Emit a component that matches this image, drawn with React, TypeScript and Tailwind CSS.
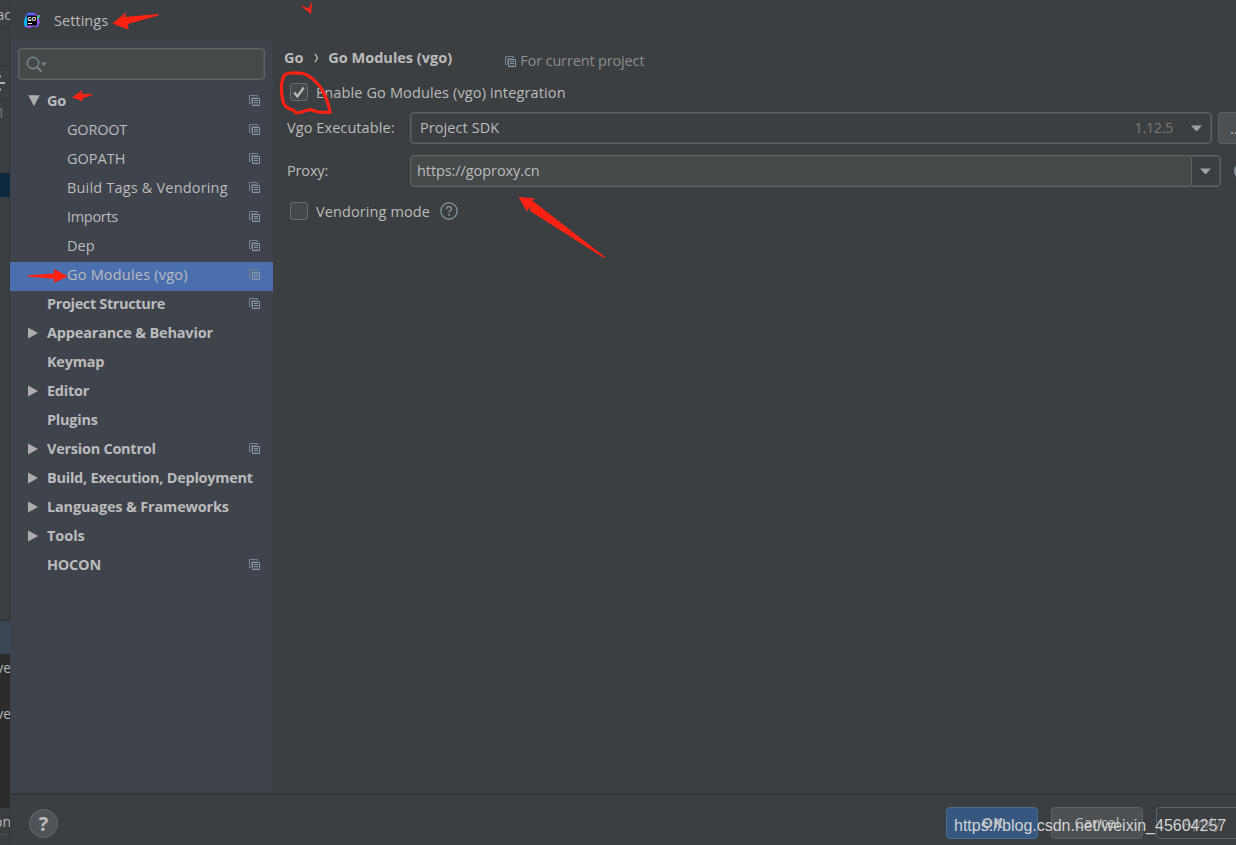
import clsx from 'clsx';

interface TreeItem {
  label: string;
  level: 'root' | 'child';
  arrow?: 'open' | 'closed';
  project?: boolean;
  selected?: boolean;
  tracking?: string;
}

const treeItems: TreeItem[] = [
  { label: 'Go', level: 'root', arrow: 'open', project: true },
  { label: 'GOROOT', level: 'child', project: true, tracking: 'tracking-[-0.2px]' },
  { label: 'GOPATH', level: 'child', project: true },
  { label: 'Build Tags & Vendoring', level: 'child', project: true, tracking: 'tracking-[0.18px]' },
  { label: 'Imports', level: 'child', project: true, tracking: 'tracking-[-0.3px]' },
  { label: 'Dep', level: 'child', project: true },
  { label: 'Go Modules (vgo)', level: 'child', project: true, selected: true, tracking: 'tracking-[0.2px]' },
  { label: 'Project Structure', level: 'root', project: true, tracking: 'tracking-[-0.36px]' },
  { label: 'Appearance & Behavior', level: 'root', arrow: 'closed', tracking: 'tracking-[-0.19px]' },
  { label: 'Keymap', level: 'root' },
  { label: 'Editor', level: 'root', arrow: 'closed' },
  { label: 'Plugins', level: 'root' },
  { label: 'Version Control', level: 'root', arrow: 'closed', project: true },
  { label: 'Build, Execution, Deployment', level: 'root', arrow: 'closed' },
  { label: 'Languages & Frameworks', level: 'root', arrow: 'closed', tracking: 'tracking-[-0.17px]' },
  { label: 'Tools', level: 'root', arrow: 'closed', tracking: 'tracking-[-0.05px]' },
  { label: 'HOCON', level: 'root', project: true },
];

function ProjectIcon() {
  return (
    <svg width="11" height="11" viewBox="0 0 11 11" fill="none" className="shrink-0">
      <path d="M8.500 2V.5H.5v8H2" stroke="#76818a" />
      <path d="M2.500 8V2.500H8" stroke="#626c76" />
      <path d="M3.500 3.500h7v7h-7z" stroke="#8d99a2" />
      <path d="M5 5.500h4M5 7.500h4" stroke="#8d99a2" />
      <path d="M5 9.200h4" stroke="#6f7a83" strokeWidth="0.6" />
    </svg>
  );
}

function TreeArrow({ type }: { type: 'open' | 'closed' }) {
  return (
    <svg width="12" height="12" viewBox="0 0 12 12" fill="#adadad">
      {type === 'open' ? <path d="M.3 .3h11.400L6 11.300z" /> : <path d="M0 .5v11L10 6z" />}
    </svg>
  );
}

function GolandIcon() {
  return (
    <svg width="16" height="17" viewBox="0 0 16 17">
      <defs>
        <linearGradient id="goland" x1="0" y1="0" x2="1" y2="1">
          <stop offset="0" stopColor="#1b8df5" />
          <stop offset="0.3" stopColor="#5a5cf5" />
          <stop offset="0.5" stopColor="#b04df5" />
          <stop offset="1" stopColor="#7c6bff" />
        </linearGradient>
      </defs>
      <path d="M3 1 10 .5 13 3h3l-1 4 .8 4-2.300 4-4.500-.5L5 16l-4-1-1-5 1.500-5z" fill="url(#goland)" />
      <path d="M0 10 1.500 4l2 3v8L.5 14z" fill="#00b4f0" />
      <path d="m13 4 3-1-1.500 4-1.500-1z" fill="#27dc7c" />
      <path d="M3 3.500h10v10H3z" fill="#000" />
      <text x="3.200" y="8.800" fontSize="6" fontWeight="700" fill="#fff">GO</text>
      <path d="M4 11.500h4" stroke="#fff" />
    </svg>
  );
}

// Sliver of the IDE window that stays visible left of the dialog
function EditorEdge() {
  return (
    <div className="flex w-2.5 shrink-0 flex-col overflow-hidden bg-[#3c3f41] text-[14px] text-[#b4b6b7] shadow-[inset_-1px_0_0_#323536]">
      <div className="flex h-[29px] items-center justify-end border-b border-[#323232]">
        <span className="-mr-px">ac</span>
      </div>
      <div className="h-[37px] border-b border-[#323232]" />
      <div className="flex h-[34px] items-center border-b border-[#323232]">
        <svg width="6" height="18" viewBox="0 0 6 18">
          <path d="M0 9h5M0 2.500h1M0 15.500h1" stroke="#afb1b3" strokeWidth="2" />
        </svg>
      </div>
      <div className="flex h-[73px] justify-start pt-[3px] leading-5 text-[#777a7d]">
        <span className="-ml-[3px]">1</span>
      </div>
      <div className="h-6 bg-[#0d293e]" />
      <div className="h-[424px] shrink-0 border-b border-[#323232]" />
      <div className="h-[33px] shrink-0 bg-[#3b4754]" />
      <div className="flex h-[154px] shrink-0 flex-col items-end gap-[26px] bg-[#2b2b2b] pt-1 leading-5">
        <span className="-mr-px">ve</span>
        <span className="-mr-px">ve</span>
      </div>
      <div className="flex h-[27px] shrink-0 items-center justify-end border-b border-[#4b4e50]">
        <span className="-mr-px">on</span>
      </div>
    </div>
  );
}

function Sidebar() {
  return (
    <aside className="flex w-[263px] shrink-0 flex-col bg-[#3f434c]">
      <div className="mx-2 mt-2 flex h-8 items-center rounded-[4px] border border-[#5f6365] bg-[#45494a] px-[7px] shadow-[inset_0_0_0_1px_#505456]">
        <svg width="22" height="17" viewBox="0 0 22 17" fill="none">
          <circle cx="7" cy="7" r="5.700" stroke="#7b868c" strokeWidth="1.400" />
          <path d="m11 11 4.500 4.500" stroke="#7b868c" strokeWidth="1.800" />
          <path d="M15 6.500h6L18 10z" fill="#7b868c" />
        </svg>
      </div>
      <ul className="mt-2">
        {treeItems.map((item) => (
          <li
            key={item.label}
            className={clsx(
              'flex h-[29px] items-center pr-[13px] text-[#bbbbbb]',
              item.selected && 'bg-[#4b6eaf]'
            )}
          >
            <span className={clsx('flex shrink-0 pb-1', item.level === 'root' ? 'w-[37px] pl-[18px]' : 'w-[57px]')}>
              {item.arrow && <TreeArrow type={item.arrow} />}
            </span>
            <span
              className={clsx(
                'flex-1 whitespace-nowrap pb-[3px]',
                item.level === 'root' && 'text-[14.500px] font-bold',
                item.tracking ?? (item.level === 'root' && 'tracking-[-0.26px]')
              )}
            >
              {item.label}
            </span>
            {item.project && (
              <span className="flex shrink-0 pb-1">
                <ProjectIcon />
              </span>
            )}
          </li>
        ))}
      </ul>
    </aside>
  );
}

function Checkbox({ checked }: { checked?: boolean }) {
  return (
    <span className="flex size-[18px] items-center justify-center rounded-[3px] border border-[#6b6e70] bg-[#43494a]">
      {checked && (
        <svg width="12" height="13" viewBox="0 0 12 13" fill="none">
          <path d="m1.200 6.500 3.200 4L10.800 1.500" stroke="#bbb" strokeWidth="2.200" />
        </svg>
      )}
    </span>
  );
}

function DownArrow() {
  return (
    <svg width="11" height="7" viewBox="0 0 11 7" fill="#9da2a6">
      <path d="M0 .5h11L5.500 6.500z" />
    </svg>
  );
}

function ModulesPage() {
  return (
    <main className="flex min-w-0 flex-1 flex-col overflow-hidden">
      <div className="flex h-[41px] items-start pl-[11px] pt-2">
        <span className="text-[14.500px] font-bold leading-5 tracking-[-0.1px]">Go</span>
        <svg width="6" height="10" viewBox="0 0 6 10" fill="none" className="ml-[11px] mt-[5px]">
          <path d="m1 .8 2.500 4.200L1 9.200" stroke="#bbb" strokeWidth="1.300" />
        </svg>
        <span className="ml-2 w-[177px] text-[14.500px] font-bold leading-5">Go Modules (vgo)</span>
        <span className="mt-[3px] flex items-center gap-1 leading-5 tracking-[-0.15px] text-[#8c8c8c]">
          <ProjectIcon />
          For current project
        </span>
      </div>

      <label className="flex h-[22px] items-center gap-2 pl-[17px] tracking-[0.14px]">
        <Checkbox checked />
        <span className="pt-0.5">Enable Go Modules (vgo) integration</span>
      </label>

      <div className="mt-[9px] flex h-8 items-center pl-3.5">
        <span className="w-[123px] shrink-0 tracking-[0.08px]">Vgo Executable:</span>
        <div className="flex h-8 w-[802px] shrink-0 items-center rounded-[4px] border border-[#5f6264] px-[9px] shadow-[inset_0_0_0_1px_#4c4f51]">
          <span className="flex-1 tracking-[0.08px]">Project SDK</span>
          <span className="mr-[18px] tracking-[-0.4px] text-[#777a7c]">1.12.5</span>
          <DownArrow />
        </div>
        <div className="ml-1.5 flex h-8 w-10 shrink-0 items-center rounded-[4px] border border-[#5f6264] bg-[#4c5052] pl-[11px] pt-0.5">
          ...
        </div>
      </div>

      <div className="mt-[11px] flex h-8 items-center pl-3.5">
        <span className="w-[123px] shrink-0 tracking-[-0.15px]">Proxy:</span>
        <div className="flex h-8 w-[811px] shrink-0 overflow-hidden rounded-[4px] border border-[#5f6264] bg-[#4c4f51] p-px">
          <span className="flex-1 rounded-l-[2px] bg-[#45494a] pl-[5px] leading-7 tracking-[-0.08px]">
            https://goproxy.cn
          </span>
          <span className="flex w-7 items-center justify-center rounded-r-[2px] border-l border-[#5f6264] bg-[#3c3f41]">
            <DownArrow />
          </span>
        </div>
        <span className="ml-[13px] size-[18px] shrink-0 rounded-full border-2 border-[#7f8b91]" />
      </div>

      <div className="mt-3 flex h-6 items-center pl-[17px]">
        <Checkbox />
        <span className="ml-2 w-[124px] pt-0.5 tracking-[0.1px]">Vendoring mode</span>
        <svg width="18" height="18" viewBox="0 0 18 18" fill="none" stroke="#7f8b91">
          <circle cx="9" cy="9" r="8.200" strokeWidth="1.400" />
          <path d="M6.500 7.200c0-3.400 5-3.400 5-.4 0 1.900-2.500 1.900-2.500 3.700" strokeWidth="1.500" />
          <path d="M9 12v1.700" strokeWidth="1.700" />
        </svg>
      </div>
    </main>
  );
}

function Footer() {
  return (
    <footer className="flex h-[52px] shrink-0 items-start overflow-hidden border-t-2 border-[#333638] pl-[19px]">
      <span className="mt-3.5 flex size-[29px] shrink-0 items-center justify-center rounded-full border border-[#66696b] bg-[#4f5355] text-[20px] font-bold leading-none text-[#bbbbbb]">
        ?
      </span>
      <div className="ml-[888px] mt-3 flex shrink-0 gap-[13px]">
        <button className="h-8 w-[92px] rounded-[4px] border border-[#4c708c] bg-[#365880] font-bold">OK</button>
        <button className="h-8 w-[92px] rounded-[4px] border border-[#5f6264] bg-[#4c5052]">Cancel</button>
        <button className="h-8 w-[92px] rounded-[4px] border border-[#5f6264] text-[#777777]">Apply</button>
      </div>
    </footer>
  );
}

// Hand-drawn red marks on top of the dialog
function Annotations() {
  return (
    <svg width="1236" height="845" viewBox="0 0 1236 845" className="pointer-events-none absolute left-0 top-0" fill="#ff2213">
      <path d="m112.500 23.500 14-11.500-2 5 34-3v1.500L131 23l-3 1 .5 5.500z" />
      <path d="m72 97.500 10.500-7.500-1 4 11 .3v.8L82 98.500l.5 3.500-3-2z" />
      <path d="M27.500 275.300 54 273.500V269l14 7.500-14.500 6.500 1-4-26.500-2.500z" />
      <path d="m518.500 197 17.500 1.500-4.500 1.500 73.500 57-1 1-74-47 .5-4.500-3.500 5z" />
      <path d="m300 5 8.500 3.500L312 1.500l-1 12.500z" />
      <path
        d="M303 73.500c-8-1.500-17-.5-19 2-3.500 7-2.500 19-1 26 1 5 5 7 11 9l2 2.500 4-.5 10-3 8 2.500 12 .5c-1-9-5-18-10-26-5-6-12-12-17-13z"
        fill="none"
        stroke="#ff2213"
        strokeWidth="3.200"
        strokeLinejoin="round"
      />
    </svg>
  );
}

export default function App() {
  return (
    <div className="relative flex h-[845px] w-[1236px] overflow-hidden bg-[#3c3f41] font-['Open_Sans','Noto_Sans',sans-serif] text-[14.500px] text-[#bbbbbb]">
      <EditorEdge />
      <div className="flex min-w-0 flex-1 flex-col">
        <header className="flex h-10 shrink-0 items-center gap-3.5 pl-3.5">
          <GolandIcon />
          <span className="pt-0.5 tracking-[0.05px]">Settings</span>
        </header>
        <div className="flex min-h-0 flex-1">
          <Sidebar />
          <ModulesPage />
        </div>
        <Footer />
      </div>
      <Annotations />
      <div className="absolute left-[954px] top-[816px] whitespace-nowrap font-['Liberation_Sans',sans-serif] text-[16px] leading-5 text-[#d2d3d3]">
        https://blog.csdn.net/weixin_45604257
      </div>
    </div>
  );
}
